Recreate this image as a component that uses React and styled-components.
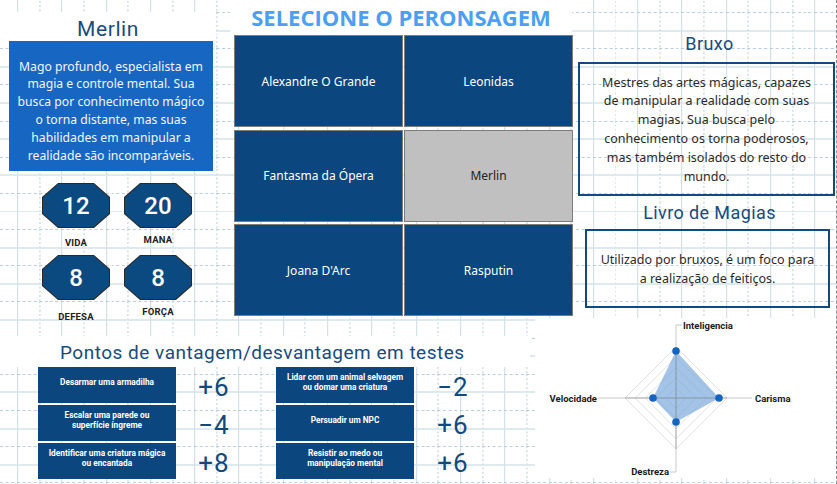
import React from 'react';
import styled, { createGlobalStyle } from 'styled-components';

const gridTile = `<svg xmlns="http://www.w3.org/2000/svg" width="44.3" height="36.2" viewBox="0 0 44.3 36.2">
<line x1="0.5" y1="0" x2="0.5" y2="36.2" stroke="#d3e2e9" stroke-width="1.4"/>
<line x1="22.6" y1="0" x2="22.6" y2="36.2" stroke="#b9cdd7" stroke-width="1" stroke-dasharray="2 2.2"/>
<line x1="0" y1="0.5" x2="44.3" y2="0.5" stroke="#bccfd9" stroke-width="1" stroke-dasharray="3 2.5"/>
<line x1="0" y1="18.6" x2="44.3" y2="18.6" stroke="#d5e3ea" stroke-width="1.4"/>
</svg>`;

const gridUrl = `url("data:image/svg+xml,${encodeURIComponent(gridTile)}")`;

const GlobalStyle = createGlobalStyle`
  html, body { margin: 0; padding: 0; background: #fff; }
  body { font-family: "Noto Sans", sans-serif; }
  * { box-sizing: border-box; }
`;

const Page = styled.div`
  width: 837px;
  height: 484px;
  overflow: hidden;
  background-color: #fff;
  background-image: ${gridUrl};
  background-size: 44.3px 36.2px;
  background-position: 17px 12px;
  border-right: 1px dashed #8a8a8a;
  display: flex;
  flex-direction: column;
`;

const TopRow = styled.div`
  height: 318px;
  display: grid;
  grid-template-columns: 230px 345px 1fr;
`;

const LeftCol = styled.div`
  padding-top: 12px;
  display: flex;
  flex-direction: column;
`;

const HeroName = styled.div`
  width: 216px;
  height: 29px;
  background: #fff;
  color: #164c7e;
  font-family: Roboto, sans-serif;
  font-size: 21px;
  letter-spacing: 0.6px;
  display: flex;
  align-items: center;
  justify-content: center;
  padding-top: 4px;
`;

const HeroDesc = styled.div`
  margin-left: 9px;
  width: 204px;
  height: 130px;
  background: #1767c2;
  color: #f4f4ff;
  font-size: 12.2px;
  line-height: 17.8px;
  text-align: center;
  white-space: nowrap;
  display: flex;
  align-items: center;
  justify-content: center;
  padding: 10px 2px 0;
`;

const Stats = styled.div`
  margin: 12px 0 0 42px;
  display: grid;
  grid-template-columns: 68px 68px;
  column-gap: 14px;
  row-gap: 7px;
`;

const Stat = styled.div`
  display: flex;
  flex-direction: column;
  align-items: center;
`;

const Octagon = styled.div`
  width: 68px;
  height: 45px;
  background: #2a2a2a;
  clip-path: polygon(16px 0, calc(100% - 16px) 0, 100% 14px, 100% calc(100% - 14px), calc(100% - 16px) 100%, 16px 100%, 0 calc(100% - 14px), 0 14px);
  display: flex;
  align-items: center;
  justify-content: center;
`;

const OctagonInner = styled.div`
  width: 66px;
  height: 43px;
  background: #0b4a80;
  clip-path: polygon(15.5px 0, calc(100% - 15.5px) 0, 100% 13.5px, 100% calc(100% - 13.5px), calc(100% - 15.5px) 100%, 15.5px 100%, 0 calc(100% - 13.5px), 0 13.5px);
  color: #fff;
  font-family: Roboto, sans-serif;
  font-size: 24px;
  font-weight: 500;
  display: flex;
  align-items: center;
  justify-content: center;
`;

const StatLabel = styled.div`
  margin-top: ${p => p.$offset || 8}px;
  font-family: Roboto, sans-serif;
  font-weight: 700;
  font-size: 9.5px;
  color: #222;
  letter-spacing: 0.2px;
`;

const MidCol = styled.div`
  display: flex;
  flex-direction: column;
`;

const MainTitle = styled.div`
  height: 35px;
  width: 342px;
  background: #fff;
  color: #4aa0f4;
  font-family: "Open Sans", sans-serif;
  font-weight: 700;
  font-size: 22px;
  display: flex;
  align-items: center;
  justify-content: center;
  padding-bottom: 2px;
`;

const CharGrid = styled.div`
  margin-left: 4px;
  display: grid;
  grid-template-columns: 169px 169px;
  grid-auto-rows: 92px;
  column-gap: 1px;
  row-gap: 2.5px;
`;

const CharCell = styled.div`
  background: ${p => (p.$selected ? '#c0c0c0' : '#0b467f')};
  color: ${p => (p.$selected ? '#222' : '#fff')};
  border: 1px solid #7d7d7d;
  font-size: 12px;
  display: flex;
  align-items: center;
  justify-content: center;
`;

const RightCol = styled.div`
  display: flex;
  flex-direction: column;
`;

const SideTitle = styled.div`
  margin-top: ${p => p.$top}px;
  height: ${p => p.$h}px;
  color: #164c7e;
  font-family: Roboto, sans-serif;
  font-size: 18px;
  letter-spacing: 0.4px;
  text-align: center;
  padding-left: 8px;
`;

const SideBox = styled.div`
  margin-left: ${p => p.$left}px;
  width: ${p => p.$w}px;
  height: ${p => p.$h}px;
  border: 2px solid #124a7e;
  color: #2a2a2a;
  font-size: 12.5px;
  line-height: 18.8px;
  text-align: center;
  white-space: nowrap;
  display: flex;
  align-items: center;
  justify-content: center;
  padding: 2px 4px 0;
`;

const BottomRow = styled.div`
  flex: 1;
  display: grid;
  grid-template-columns: 535px 1fr;
`;

const PointsSection = styled.div`
  padding-top: 18px;
  display: flex;
  flex-direction: column;
`;

const PointsTitle = styled.div`
  height: 31px;
  width: 530px;
  background: #fff;
  color: #164c7e;
  font-family: Roboto, sans-serif;
  font-size: 19px;
  letter-spacing: 0.5px;
  padding: 5px 0 0 60px;
`;

const Tables = styled.div`
  display: flex;
  padding-left: 38px;
`;

const SkillTable = styled.div`
  display: grid;
  grid-template-columns: 138px ${p => p.$valueW}px;
  grid-auto-rows: 36px;
  row-gap: 2px;
`;

const SkillBox = styled.div`
  background: #0b467f;
  color: #fff;
  font-family: Roboto, sans-serif;
  font-weight: 700;
  font-size: 8.3px;
  line-height: 9.5px;
  text-align: center;
  white-space: nowrap;
  display: flex;
  align-items: center;
  justify-content: center;
  padding: 0 4px 5px;
`;

const SkillValue = styled.div`
  color: #124a7e;
  font-family: Roboto, sans-serif;
  font-size: 26px;
  display: flex;
  align-items: center;
  justify-content: center;
  padding-top: 3px;
  padding-right: ${p => p.$shift || 0}px;
  letter-spacing: 1px;
`;

const ChartPanel = styled.div`
  height: 160px;
  background: #fff;
`;

const ChartLabel = styled.text`
  font-family: Roboto, sans-serif;
  font-weight: 700;
  font-size: 9.5px;
  fill: #1a1a1a;
`;

const stats = [
  { value: '12', label: 'VIDA', offset: 9 },
  { value: '20', label: 'MANA', offset: 6 },
  { value: '8', label: 'DEFESA', offset: 11 },
  { value: '8', label: 'FORÇA', offset: 6 },
];

const characters = [
  'Alexandre O Grande',
  'Leonidas',
  'Fantasma da Ópera',
  'Merlin',
  "Joana D'Arc",
  'Rasputin',
];

const skillsLeft = [
  [['Desarmar uma armadilha'], '+6'],
  [['Escalar uma parede ou', 'superfície íngreme'], '−4'],
  [['Identificar uma criatura mágica', 'ou encantada'], '+8'],
];

const skillsRight = [
  [['Lidar com um animal selvagem', 'ou domar uma criatura'], '−2'],
  [['Persuadir um NPC'], '+6'],
  [['Resistir ao medo ou', 'manipulação mental'], '+6'],
];

const Lines = ({ lines }) =>
  lines.map((l, i) => (
    <React.Fragment key={l}>
      {i > 0 && <br />}
      {l}
    </React.Fragment>
  ));

const RadarChart = () => {
  const cx = 141;
  const cy = 80;
  const rings = [10.2, 20.4, 30.6, 40.8, 51];
  const pts = [
    [cx, cy - 47],
    [cx + 43, cy],
    [cx, cy + 24],
    [cx - 23, cy],
  ];
  return (
    <svg width="302" height="160" viewBox="0 0 302 160">
      {rings.map(r => (
        <polygon
          key={r}
          points={`${cx},${cy - r} ${cx + r},${cy} ${cx},${cy + r} ${cx - r},${cy}`}
          fill="none"
          stroke="#e2e2e2"
          strokeWidth="1"
        />
      ))}
      <line x1={cx} y1={cy} x2={cx} y2={7} stroke="#c9c9c9" />
      <line x1={cx} y1={7} x2={cx + 6} y2={7} stroke="#c9c9c9" />
      <line x1={cx} y1={cy} x2={cx} y2={154} stroke="#c9c9c9" />
      <line x1={cx} y1={154} x2={cx - 6} y2={154} stroke="#c9c9c9" />
      <line x1={cx} y1={cy} x2={217} y2={cy} stroke="#c9c9c9" />
      <line x1={cx} y1={cy} x2={63} y2={cy} stroke="#c9c9c9" />
      <polygon
        points={pts.map(p => p.join(',')).join(' ')}
        fill="#6a9fd6"
        fillOpacity="0.62"
        stroke="none"
      />
      <line x1={cx} y1={cy - 51} x2={cx} y2={cy + 51} stroke="#8a8a8a" strokeOpacity="0.5" />
      <line x1={cx - 51} y1={cy} x2={cx + 51} y2={cy} stroke="#8a8a8a" strokeOpacity="0.5" />
      {pts.map(p => (
        <circle key={p.join('-')} cx={p[0]} cy={p[1]} r="3.8" fill="#1565c0" />
      ))}
      <ChartLabel x="148" y="11">Inteligencia</ChartLabel>
      <ChartLabel x="220" y="83.5">Carisma</ChartLabel>
      <ChartLabel x="62" y="83.5" textAnchor="end">Velocidade</ChartLabel>
      <ChartLabel x="134" y="157" textAnchor="end">Destreza</ChartLabel>
    </svg>
  );
};

export default function App() {
  return (
    <>
      <GlobalStyle />
      <Page>
        <TopRow>
          <LeftCol>
            <HeroName>Merlin</HeroName>
            <HeroDesc>
              <div>
                <Lines
                  lines={[
                    'Mago profundo, especialista em',
                    'magia e controle mental. Sua',
                    'busca por conhecimento mágico',
                    'o torna distante, mas suas',
                    'habilidades em manipular a',
                    'realidade são incomparáveis.',
                  ]}
                />
              </div>
            </HeroDesc>
            <Stats>
              {stats.map(s => (
                <Stat key={s.label}>
                  <Octagon>
                    <OctagonInner>{s.value}</OctagonInner>
                  </Octagon>
                  <StatLabel $offset={s.offset}>{s.label}</StatLabel>
                </Stat>
              ))}
            </Stats>
          </LeftCol>

          <MidCol>
            <MainTitle>SELECIONE O PERONSAGEM</MainTitle>
            <CharGrid>
              {characters.map(c => (
                <CharCell key={c} $selected={c === 'Merlin'}>{c}</CharCell>
              ))}
            </CharGrid>
          </MidCol>

          <RightCol>
            <SideTitle $top={33} $h={29}>Bruxo</SideTitle>
            <SideBox $left={3} $w={257} $h={134}>
              <div>
                <Lines
                  lines={[
                    'Mestres das artes mágicas, capazes',
                    'de manipular a realidade com suas',
                    'magias. Sua busca pelo',
                    'conhecimento os torna poderosos,',
                    'mas também isolados do resto do',
                    'mundo.',
                  ]}
                />
              </div>
            </SideBox>
            <SideTitle $top={6} $h={27}>Livro de Magias</SideTitle>
            <SideBox $left={10} $w={245} $h={79}>
              <div>
                <Lines lines={['Utilizado por bruxos, é um foco para', 'a realização de feitiços.']} />
              </div>
            </SideBox>
          </RightCol>
        </TopRow>

        <BottomRow>
          <PointsSection>
            <PointsTitle>Pontos de vantagem/desvantagem em testes</PointsTitle>
            <Tables>
              <SkillTable $valueW={100}>
                {skillsLeft.map(([t, v]) => (
                  <React.Fragment key={t[0]}>
                    <SkillBox><div><Lines lines={t} /></div></SkillBox>
                    <SkillValue $shift={24}>{v}</SkillValue>
                  </React.Fragment>
                ))}
              </SkillTable>
              <SkillTable $valueW={78}>
                {skillsRight.map(([t, v]) => (
                  <React.Fragment key={t[0]}>
                    <SkillBox><div><Lines lines={t} /></div></SkillBox>
                    <SkillValue>{v}</SkillValue>
                  </React.Fragment>
                ))}
              </SkillTable>
            </Tables>
          </PointsSection>
          <ChartPanel>
            <RadarChart />
          </ChartPanel>
        </BottomRow>
      </Page>
    </>
  );
}
